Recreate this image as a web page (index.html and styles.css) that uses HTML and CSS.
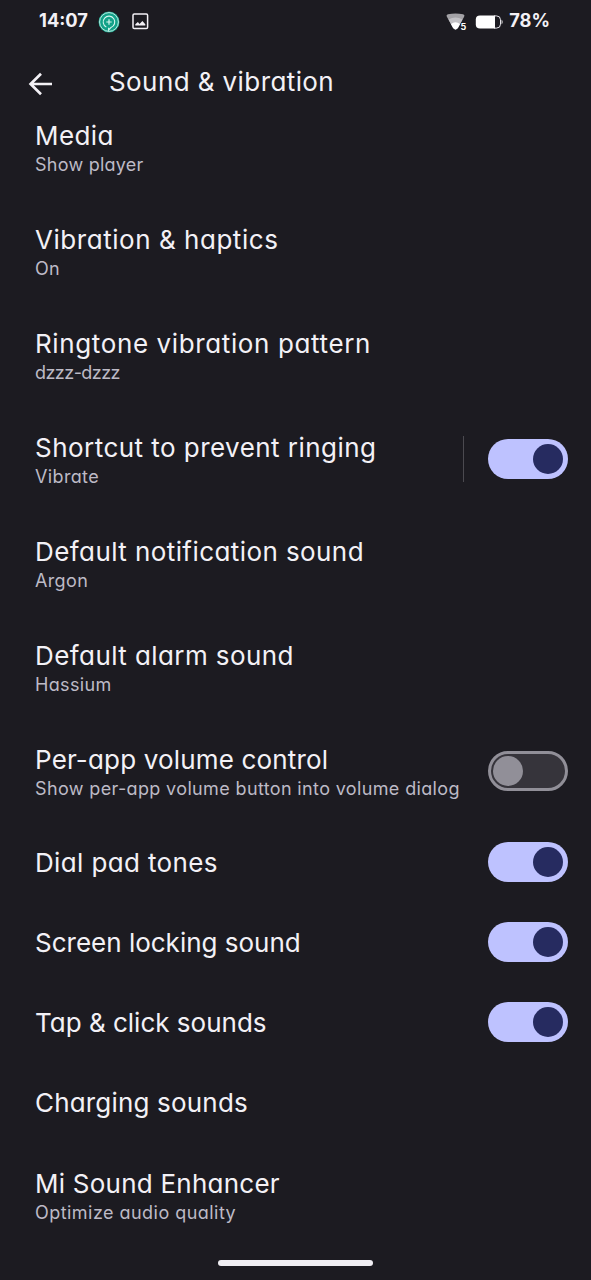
FILE: index.html
```html
<!DOCTYPE html>
<html lang="en">
<head>
<meta charset="utf-8">
<title>Sound &amp; vibration</title>
<link rel="stylesheet" href="styles.css">
</head>
<body>
<div class="status">
  <span class="clock">14:07</span>
  <svg class="app-icon" width="22" height="22" viewBox="0 0 22 22"><circle cx="11" cy="11" r="10.5" fill="#12a188"/><g fill="none" stroke="#d5f5ee"><circle cx="11" cy="11" r="9.4" stroke-width=".9"/><path d="M8.3 16.1A5.8 5.8 0 1 1 13 16.4L10.6 19V16.8" stroke-width="1.1"/><path d="M11 8.3v5.4M8.3 11h5.4" stroke-width="1.2"/></g></svg>
  <svg class="image-icon" width="17" height="17" viewBox="0 0 17 17"><rect x="1" y="1" width="14.6" height="14.6" rx="1.3" fill="none" stroke="#f3f1f6" stroke-width="1.5"/><path d="M3.3 12.5V11.2L5.9 8.9 7.5 10.9 10.4 7.9 13.3 11.2V12.5Z" fill="#f3f1f6"/></svg>
  <svg class="wifi" width="21" height="20" viewBox="0 0 21 20"><path d="M2 2.2Q9.5.6 17 2.2 19.2 2.8 18 4.9L12 15.8Q9.5 19 7 15.8L1 4.9Q-.2 2.8 2 2.2Z" fill="#a3a2a6"/><path d="M2.5 7.6Q9.5 3.5 16.5 7.6L12 15.8Q9.5 19 7 15.8Z" fill="#c2c1c5"/><path d="M5 12Q9.5 8.6 14 12L12 15.8Q9.5 19 7 15.8Z" fill="#fff"/><text x="14.6" y="18.2" class="wifi-gen">5</text></svg>
  <svg class="battery" width="29" height="16" viewBox="0 0 29 16"><path d="M5 1.6H20V14.4H5Q.8 14.4.8 10.5V5.5Q.8 1.6 5 1.6Z" fill="#fff"/><path d="M19 1.9H21.5Q25.5 1.9 25.5 5.8V10.2Q25.5 14.1 21.5 14.1H19" fill="none" stroke="#e8e6ec"/><path d="M26.6 5.5Q28.6 8 26.6 10.5Z" fill="#fff"/></svg>
  <span class="percent">78%</span>
</div>
<header class="header">
  <svg class="back" width="26" height="24" viewBox="0 0 26 24"><path d="M13 1.8 2.6 12 13 22.2M2.6 12H24" fill="none" stroke="#f3f1f6" stroke-width="2.7"/></svg>
  <h1 class="heading">Sound &amp; vibration</h1>
</header>
<main>
  <div class="row media"><div class="label"><div class="title">Media</div><div class="sub">Show player</div></div></div>
  <div class="row haptics"><div class="label"><div class="title">Vibration &amp; haptics</div><div class="sub">On</div></div></div>
  <div class="row ringtone"><div class="label"><div class="title">Ringtone vibration pattern</div><div class="sub">dzzz-dzzz</div></div></div>
  <div class="row shortcut"><div class="label"><div class="title">Shortcut to prevent ringing</div><div class="sub">Vibrate</div></div><span class="divider"></span><span class="switch on"></span></div>
  <div class="row"><div class="label"><div class="title">Default notification sound</div><div class="sub">Argon</div></div></div>
  <div class="row"><div class="label"><div class="title">Default alarm sound</div><div class="sub">Hassium</div></div></div>
  <div class="row per-app"><div class="label"><div class="title">Per-app volume control</div><div class="sub">Show per-app volume button into volume dialog</div></div><span class="switch"></span></div>
  <div class="row single dial"><div class="label"><div class="title">Dial pad tones</div></div><span class="switch on"></span></div>
  <div class="row single locking"><div class="label"><div class="title">Screen locking sound</div></div><span class="switch on"></span></div>
  <div class="row single tap"><div class="label"><div class="title">Tap &amp; click sounds</div></div><span class="switch on"></span></div>
  <div class="row single charging"><div class="label"><div class="title">Charging sounds</div></div></div>
  <div class="row enhancer"><div class="label"><div class="title">Mi Sound Enhancer</div><div class="sub">Optimize audio quality</div></div></div>
</main>
<div class="home-bar"></div>
</body>
</html>
```
FILE: styles.css
```css
* { box-sizing: border-box; }
body {
  margin: 0;
  width: 591px;
  height: 1280px;
  overflow: hidden;
  display: flex;
  flex-direction: column;
  background: #1c1b21;
  color: #f3f1f6;
  font-family: Inter, "Open Sans", sans-serif;
  font-feature-settings: "cv11", "ss03";
}
.status { height: 42px; padding: 1px 41px 0 39px; display: flex; align-items: center; }
.clock, .percent { padding-bottom: 3px; font-size: 18.3px; line-height: 37px; font-weight: 700; }
.app-icon { margin-left: 10px; }
.image-icon { margin-left: 12px; }
.wifi { margin-left: auto; overflow: visible; }
.wifi-gen { font-size: 9px; font-weight: 700; fill: #fff; }
.battery { margin: 0 5px 0 8px; }
.header { height: 52px; padding: 30px 0 0 28px; display: flex; align-items: flex-start; }
.back { flex: none; }
.heading { margin: -7px 0 0 55px; font-size: 26px; line-height: 34px; font-weight: 400; letter-spacing: .41px; white-space: nowrap; }
main { flex: none; }
.row { height: 104px; padding: 1px 23px 0 35px; display: flex; align-items: center; }
.single { height: 80px; padding-top: 0; }
.label { flex: 1; min-width: 0; padding-top: 2px; white-space: nowrap; }
.single .label { padding-top: 1px; }
.title { font-size: 26px; line-height: 34px; letter-spacing: .42px; }
.sub { font-size: 18px; line-height: 24px; letter-spacing: .36px; color: #bdbac6; }
.media .sub { letter-spacing: .24px; }
.haptics .title { letter-spacing: .54px; }
.ringtone .title { letter-spacing: .62px; }
.ringtone .sub { letter-spacing: -.55px; }
.shortcut .title { letter-spacing: .46px; }
.per-app .title { letter-spacing: .16px; }
.dial .title { letter-spacing: .36px; }
.locking .title, .tap .title { letter-spacing: 0; }
.charging .title { letter-spacing: .18px; }
.enhancer .title { letter-spacing: .24px; }
.enhancer .sub { letter-spacing: .46px; }
.divider { width: 1px; height: 46px; margin-right: 24px; background: #4b4a50; }
.switch {
  flex: none;
  width: 80px;
  height: 40px;
  padding: 2px;
  border: 3px solid #918f98;
  border-radius: 20px;
  background: #36343b;
}
.switch::before { content: ""; display: block; width: 30px; height: 30px; border-radius: 50%; background: #918f98; }
.on { padding: 5px; border: 0; background: #bec2ff; }
.on::before { margin-left: 40px; background: #262b60; }
.home-bar { width: 155px; height: 6px; margin: 14px auto 0; border-radius: 3px; background: #f0eef3; }
```
